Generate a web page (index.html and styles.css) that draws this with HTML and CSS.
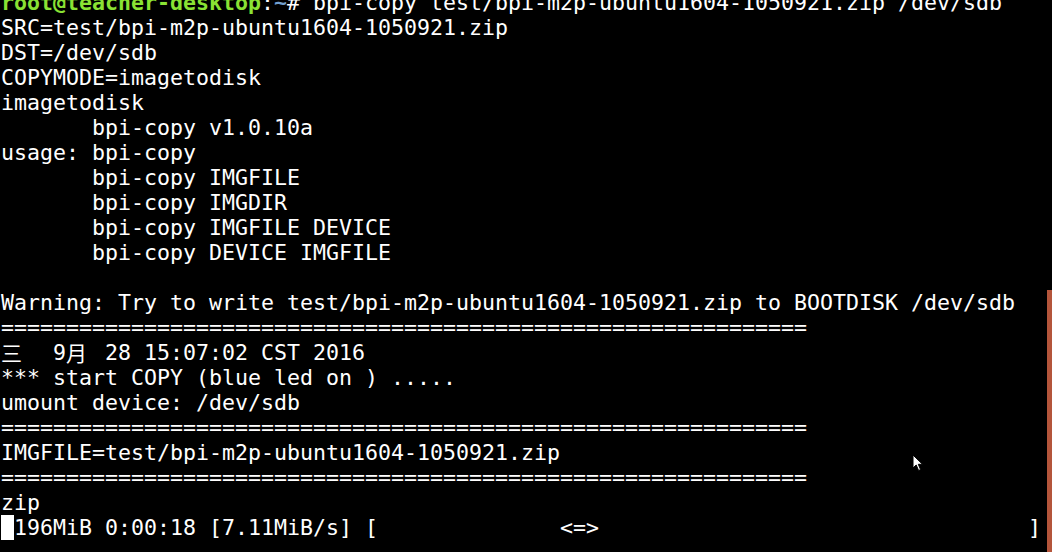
FILE: index.html
```html
<!DOCTYPE html>
<html>
<head>
  <title>Terminal</title>
  <link rel="stylesheet" href="styles.css">
</head>
<body>
<div class="screen">
  <div class="terminal">
    <div class="line"><span class="user">root@teacher-desktop</span>:<span class="path">~</span># bpi-copy test/bpi-m2p-ubuntu1604-1050921.zip /dev/sdb</div>
    <div class="line">SRC=test/bpi-m2p-ubuntu1604-1050921.zip</div>
    <div class="line">DST=/dev/sdb</div>
    <div class="line">COPYMODE=imagetodisk</div>
    <div class="line">imagetodisk</div>
    <div class="line">       bpi-copy v1.0.10a</div>
    <div class="line">usage: bpi-copy</div>
    <div class="line">       bpi-copy IMGFILE</div>
    <div class="line">       bpi-copy IMGDIR</div>
    <div class="line">       bpi-copy IMGFILE DEVICE</div>
    <div class="line">       bpi-copy DEVICE IMGFILE</div>
    <div class="line"> </div>
    <div class="line">Warning: Try to write test/bpi-m2p-ubuntu1604-1050921.zip to BOOTDISK /dev/sdb</div>
    <div class="line">==============================================================</div>
    <div class="line"><span class="wide">三</span>  9<span class="wide">月</span> 28 15:07:02 CST 2016</div>
    <div class="line">*** start COPY (blue led on ) .....</div>
    <div class="line">umount device: /dev/sdb</div>
    <div class="line">==============================================================</div>
    <div class="line">IMGFILE=test/bpi-m2p-ubuntu1604-1050921.zip</div>
    <div class="line">==============================================================</div>
    <div class="line">zip</div>
    <div class="line"><span class="cursor"> </span>196MiB 0:00:18 [7.11MiB/s] [              &lt;=&gt;                                 ]</div>
  </div>
  <div class="side-window"></div>

  <svg class="pointer" viewBox="0 0 12 18" width="12" height="18">
    <path d="M1 1 L1 14 L4.2 11 L6.6 16.5 L8.6 15.6 L6.3 10.3 L10.5 10.3 Z" fill="#fff" stroke="#000" stroke-width="1"/>
  </svg>
</div>
</body>
</html>
```

FILE: styles.css
```css
:root {
  --bg-color: #000000;
  --text-color: #ffffff;
  --user-color: #8ae234;
  --path-color: #729fcf;
  --side-color: #b4553b;
}

html, body {
  margin: 0;
  padding: 0;
  background-color: var(--bg-color);
}

.screen {
  position: relative;
  display: flex;
  width: 1052px;
  height: 552px;
  overflow: hidden;
}

.terminal {
  flex: 1;
  margin-top: -10px;
  padding-left: 1px;
  font-family: "DejaVu Sans Mono", "Liberation Mono", monospace;
  font-size: 21.6px;
  color: var(--text-color);
}

.line {
  height: 25px;
  line-height: 25px;
  white-space: pre;
}

.user {
  color: var(--user-color);
  font-weight: bold;
}

.path {
  color: var(--path-color);
  font-weight: bold;
}

.wide {
  display: inline-block;
  width: 26px;
  line-height: 25px;
  height: 25px;
  vertical-align: top;
  font-family: "Noto Sans CJK SC", sans-serif;
  font-size: 21px;
  text-align: left;
}

.cursor {
  background-color: var(--text-color);
  color: var(--bg-color);
}

.side-window {
  width: 5px;
  margin-top: 290px;
  background-color: var(--side-color);
}

.pointer {
  position: absolute;
  left: 912px;
  top: 454px;
}
```
